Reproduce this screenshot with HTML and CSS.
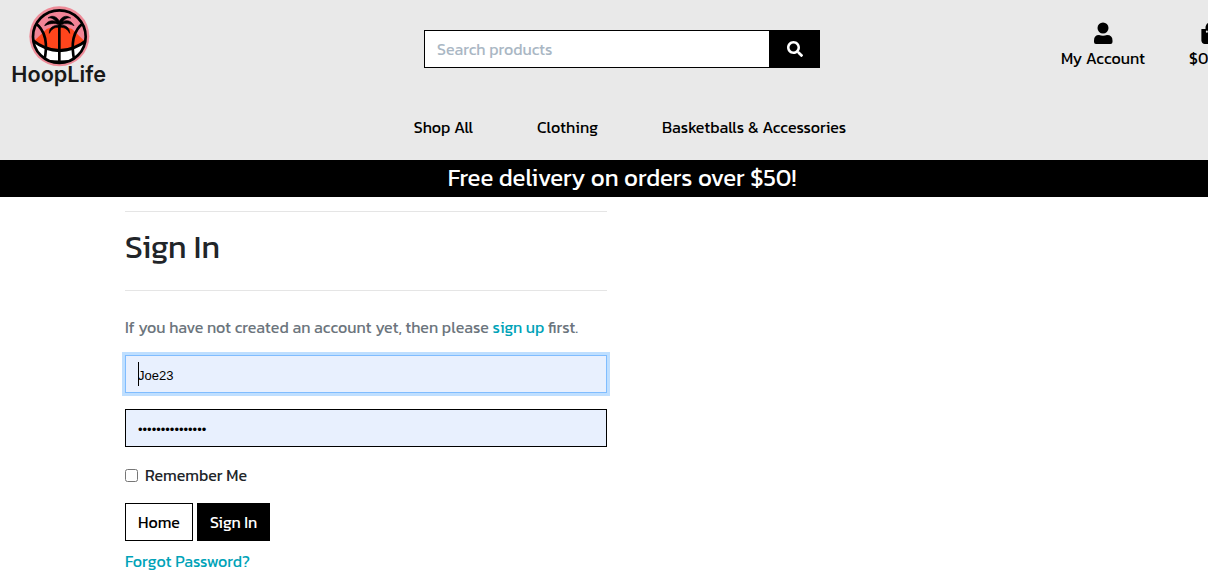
FILE: index.html
```html
<!DOCTYPE html>
<html lang="en">
<head>
<meta charset="utf-8">
<meta name="viewport" content="width=device-width, initial-scale=1">
<title>HoopLife - Sign In</title>
<link rel="stylesheet" href="styles.css">
</head>
<body>
<div class="page">
  <header class="header">
    <div class="topbar">
      <a class="logo" href="#" aria-label="HoopLife">
        <svg width="96" height="82" viewBox="36 15 288 246">
          <defs><clipPath id="ball"><circle cx="178" cy="107" r="81"/></clipPath></defs>
          <circle cx="178" cy="106" r="90" fill="#ee8b98"/>
          <g clip-path="url(#ball)">
            <rect x="90" y="20" width="180" height="180" fill="#f28496"/>
            <path d="M90 132L140 84Q178 66 216 84L266 132V200H90Z" fill="#ff451c"/>
            <path d="M90 116Q178 182 268 116V200H90Z" fill="#fff"/>
            <path d="M90 112Q178 186 268 112M96 172Q178 194 262 172" fill="none" stroke="#000" stroke-width="9"/>
            <path d="M90 168Q178 198 268 168V200H90Z" fill="#000"/>
            <path d="M104 65Q152 98 132 184M252 65Q204 98 224 184" fill="none" stroke="#000" stroke-width="8"/>
            <path d="M178 72V190" stroke="#000" stroke-width="8"/>
          </g>
          <circle cx="178" cy="107" r="79" fill="none" stroke="#000" stroke-width="8"/>
          <path d="M178 73C170 66 154 65 134 74C141 60 156 56 168 62C160 52 152 49 144 51C158 40 172 48 178 61C184 48 198 40 212 51C204 49 196 52 188 62C202 55 216 61 222 74C204 65 190 67 182 73C198 72 209 80 209 97C202 84 194 79 181 79L178 85L175 79C163 79 155 84 148 97C147 80 160 72 178 73Z" stroke="#000" stroke-width="2"/>
          <text class="logo-text" x="34" y="242">HoopLife</text>
        </svg>
      </a>
      <form class="search" role="search">
        <input class="search-input" type="text" placeholder="Search products" aria-label="Search products">
        <button class="search-button" type="button" aria-label="Search">
          <svg width="16" height="16" viewBox="0 0 512 512" fill="currentColor"><path d="M505 442.700 405.300 343c-4.500-4.500-10.600-7-17-7H372c27.600-35.300 44-79.700 44-128C416 93.100 322.900 0 208 0S0 93.100 0 208s93.100 208 208 208c48.300 0 92.700-16.400 128-44v16.300c0 6.400 2.500 12.500 7 17l99.700 99.700c9.400 9.400 24.600 9.400 33.900 0l28.300-28.300c9.400-9.400 9.400-24.600.1-34zM208 336c-70.700 0-128-57.200-128-128 0-70.700 57.200-128 128-128 70.700 0 128 57.200 128 128 0 70.700-57.200 128-128 128z"/></svg>
        </button>
      </form>
      <div class="account">
        <a class="account-link" href="#">
          <svg width="20" height="22" viewBox="0 0 20 22"><circle cx="10" cy="6" r="5.500"/><path d="M1 18.500Q1 13 6 13Q10 14.500 14 13Q19.500 13 19.500 18.500V20Q19.500 22 17.500 22H3Q1 22 1 20Z"/></svg>
          <span>My Account</span>
        </a>
        <a class="account-link" href="#">
          <svg width="20" height="22" viewBox="0 0 448 512"><path d="M352 160v-32C352 57.400 294.600 0 224 0S96 57.400 96 128v32H0v272c0 44.200 35.800 80 80 80h288c44.200 0 80-35.800 80-80V160h-96zm-192-32c0-35.300 28.700-64 64-64s64 28.700 64 64v32H160v-32zm160 120a24 24 0 1 1 0-48 24 24 0 0 1 0 48zm-192 0a24 24 0 1 1 0-48 24 24 0 0 1 0 48z"/></svg>
          <span>$0.00</span>
        </a>
      </div>
    </div>
    <nav class="nav">
      <a href="#">Shop All</a>
      <a href="#">Clothing</a>
      <a href="#">Basketballs &amp; Accessories</a>
    </nav>
  </header>
  <div class="banner">Free delivery on orders over $50!</div>
  <main class="container">
    <section class="signin">
      <hr class="rule">
      <h1 class="title">Sign In</h1>
      <hr class="rule">
      <p class="intro">If you have not created an account yet, then please <a class="link" href="#">sign up</a> first.</p>
      <form class="form">
        <div class="field">
          <input class="input input-active" type="text" value="Joe23" aria-label="Username">
          <span class="caret"></span>
        </div>
        <input class="input" type="password" value="basketballhoops" aria-label="Password">
        <label class="remember"><input class="checkbox" type="checkbox">Remember Me</label>
        <div class="actions">
          <a class="button button-light" href="#">Home</a>
          <button class="button" type="button">Sign In</button>
        </div>
        <a class="link" href="#">Forgot Password?</a>
      </form>
    </section>
  </main>
</div>
</body>
</html>
```
FILE: styles.css
```css
* {
  box-sizing: border-box;
}

body {
  margin: 0;
  overflow: hidden;
  background: #fff;
  color: #212529;
  font: 400 16px/24px Kanit, Roboto, sans-serif;
}

a {
  color: inherit;
  text-decoration: none;
}

.page {
  width: calc(100% + 36px);
}

.header {
  background: #e9e9e9;
  color: #000;
  padding-bottom: 21px;
}

.topbar {
  display: grid;
  grid-template-columns: 1fr 396px 1fr;
  align-items: start;
  padding: 6px 12px 0;
  height: 96px;
}

.logo svg {
  display: block;
}

.logo-text {
  font: 600 65px Inter, sans-serif;
  fill: #191919;
}

.search {
  display: flex;
  height: 38px;
  margin-top: 24px;
}

.search-input {
  flex: 1;
  min-width: 0;
  padding: 0 12px;
  border: 1px solid #000;
  border-radius: 0;
  background: #fff;
  font: inherit;
}

.search-input::placeholder {
  color: #aab7c4;
}

.search-button {
  display: grid;
  place-items: center;
  width: 50px;
  border: 0;
  background: #000;
  color: #fff;
}

.account {
  display: flex;
  justify-content: flex-end;
  gap: 44px;
  margin-top: 16px;
}

.account-link {
  display: flex;
  flex-direction: column;
  align-items: center;
  gap: 2px;
}

.nav {
  display: flex;
  justify-content: center;
  gap: 64px;
  padding: 19px 0 0 16px;
}

.banner {
  padding: 0 0 2px;
  background: #000;
  color: #fff;
  font-size: 24px;
  line-height: 35px;
  text-align: center;
}

.container {
  max-width: 1024px;
  margin: 0 auto;
}

.signin {
  width: 50%;
  padding: 14px 15px;
}

.rule {
  margin: 0;
  border: 0;
  border-top: 1px solid #e5e5e5;
}

.title {
  margin: 16px 0 24px;
  font-size: 32px;
  font-weight: 400;
  line-height: 38px;
}

.intro {
  margin: 24px 0 16px;
  color: #6c757d;
}

.link {
  color: #00a3b8;
}

.form {
  display: flex;
  flex-direction: column;
  align-items: flex-start;
}

.field {
  position: relative;
  width: 100%;
  margin-bottom: 16px;
}

.input {
  display: block;
  width: 100%;
  height: 38px;
  padding: 2px 12px 0;
  border: 1px solid #000;
  border-radius: 0;
  background: #e8f0fe;
  color: #000;
  font: 13px "Liberation Sans", sans-serif;
}

.input-active {
  border-color: #80bdff;
  box-shadow: 0 0 0 3px #bfdfff;
}

.caret {
  position: absolute;
  top: 7px;
  left: 13px;
  width: 1px;
  height: 24px;
  background: #000;
}

.remember {
  display: flex;
  align-items: center;
  gap: 7px;
  margin: 16px 0;
}

.checkbox {
  width: 13px;
  height: 13px;
  margin: 0;
}

.actions {
  display: flex;
  gap: 4px;
  margin-bottom: 8px;
}

.button {
  padding: 6px 12px;
  border: 1px solid #000;
  background: #000;
  color: #fff;
  font: inherit;
}

.button-light {
  background: #fff;
  color: #000;
}
```
